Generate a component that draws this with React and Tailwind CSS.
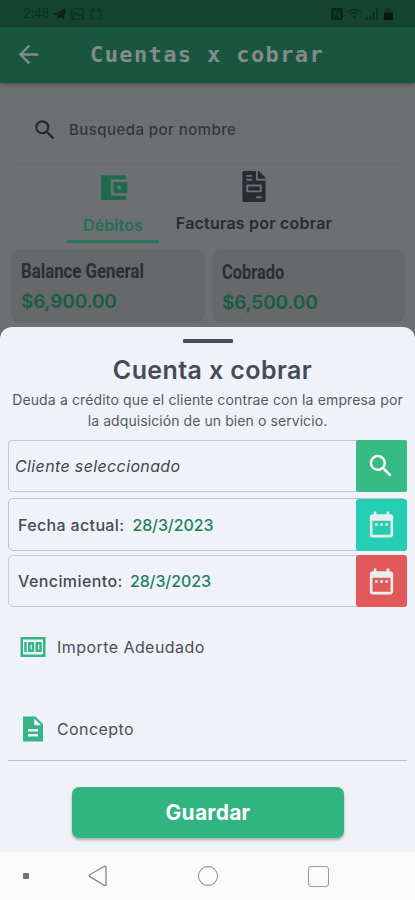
import { MdArrowBack, MdSearch, MdDateRange, MdMoney, MdWifi } from "react-icons/md";
import { FaFileInvoice } from "react-icons/fa";

const cards = [
  { label: "Balance General", amount: "$6,900.00", box: "w-[192px] pl-[9px] pt-[9px]", scale: "scale-x-[0.84]" },
  { label: "Cobrado", amount: "$6,500.00", box: "w-[191px] pl-[9px] pt-[10px]", scale: "scale-x-[0.82]" },
];

const dates = [
  { label: "Fecha actual:", value: "28/3/2023", color: "bg-[#25cdb2]", border: "border-[#bdbfd8]", height: "h-[53px] mt-[6px]", tracking: "tracking-[0.35px]", gap: "gap-[8px]" },
  { label: "Vencimiento:", value: "28/3/2023", color: "bg-[#e2595c]", border: "border-[#c6c8e2]", height: "h-[52px] mt-[4px]", tracking: "tracking-[0.42px]", gap: "gap-[7px]" },
];

function WalletIcon() {
  return (
    <svg viewBox="0 0 24 24" className="w-[33px] h-[33px]" fill="currentColor">
      <path d="M21 18v3H3V3h18v3H10v12h11zm-9-2h10V8H12v8zm4-2.5c-.83 0-1.5-.67-1.5-1.5s.67-1.5 1.5-1.5 1.5.67 1.5 1.5-.67 1.5-1.5 1.5z" />
    </svg>
  );
}

function DocumentIcon() {
  return (
    <svg viewBox="0 0 24 24" className="w-[30px] h-[30px]" fill="currentColor">
      <path d="M14 2H4v20h16V8l-6-6zm2 16H8v-2h8v2zm0-4H8v-2h8v2zm-3-5V3.5L18.5 9H13z" />
    </svg>
  );
}

function StatusBar() {
  return (
    <div className="h-[27px] bg-[#144430] text-[#0e3023] flex items-center justify-between pl-[23px] pr-[22px]">
      <div className="flex items-center">
        <span className="w-[30px] text-[13px] tracking-[-0.5px] leading-none">2:48</span>
        <svg viewBox="0 0 14 12" className="w-[13px] h-[12px] text-[#0a2319]" fill="currentColor">
          <path d="M0 6 14 0 11.500 12 7 9 5 11 4.500 7.500 10 3.500 3.500 7z" />
        </svg>
        <svg viewBox="0 0 13 12" className="w-[13px] h-[12px] ml-[5px]" fill="none" stroke="currentColor" strokeWidth="1.300">
          <rect x="1" y="1" width="11" height="10" />
          <path d="m2 9 3-4 2.500 3L9 6l3 3" />
        </svg>
        <svg viewBox="0 0 12 12" className="w-[12px] h-[12px] ml-[6px]" fill="none" stroke="currentColor" strokeWidth="1.200">
          <rect x="1" y="2" width="10" height="9" rx="1" strokeDasharray="3 1" />
          <path d="M3 0v3M9 0v3" />
        </svg>
      </div>
      <div className="flex items-center">
        <svg viewBox="0 0 12 12" className="w-[12px] h-[12px]">
          <rect width="12" height="12" rx="2" fill="#0b261b" />
          <path d="M3.500 9V3l5 6V3" fill="none" stroke="#144430" strokeWidth="1.100" />
        </svg>
        <MdWifi className="w-[15px] h-[15px] ml-[4px]" />
        <svg viewBox="0 0 12 12" className="w-[12px] h-[12px] ml-[4px]" fill="currentColor">
          <path d="M0 9h2v3H0zM3.300 7h2v5h-2zM6.600 4h2v8h-2zM10 0h2v12h-2z" />
        </svg>
        <svg viewBox="0 0 9 12" className="w-[9px] h-[12px] ml-[6px]">
          <path d="M3 0h3v1.500h3V12H0V1.500h3z" fill="currentColor" opacity=".6" />
          <path d="M0 5h9v7H0z" fill="#06170f" />
        </svg>
      </div>
    </div>
  );
}

function Page() {
  return (
    <div className="h-[327px] bg-[#6d7073] overflow-hidden">
      <StatusBar />
      <header className="h-[56px] bg-[#19563f] flex items-center pl-[14px] text-[#838c88] shadow-[0_1px_4px_rgba(0,0,0,0.35)]">
        <MdArrowBack className="w-[29px] h-[29px] mb-[2px]" />
        <h1 className="ml-[47px] font-['DejaVu_Sans_Mono',monospace] font-bold text-[22px] tracking-[1.38px] leading-none whitespace-nowrap">Cuentas x cobrar</h1>
      </header>

      <div className="ml-[18px] mr-[13px] h-[82px] border-b border-[#65696c] flex items-center pt-[13px] pl-[14px] text-[#31373c]">
        <MdSearch className="w-[26px] h-[26px] text-[#24292e]" />
        <span className="ml-[11px] text-[15px] tracking-[0.44px] font-medium whitespace-nowrap">Busqueda por nombre</span>
      </div>

      <div className="flex h-[85px] text-[16px] font-semibold">
        <div className="ml-[67px] w-[92px] h-[78px] border-b-[3px] border-[#2b7359] flex flex-col items-center text-[#1c6a4b]">
          <div className="mt-[6px] h-[33px]"><WalletIcon /></div>
          <span className="mt-[9px] leading-[24px] tracking-[0.1px] text-[#246f54]">Débitos</span>
        </div>
        <div className="ml-[14px] w-[162px] flex flex-col items-center text-[#262c31]">
          <FaFileInvoice className="mt-[6px] w-[24px] h-[31px]" />
          <span className="mt-[9px] leading-[24px] tracking-[0.22px] whitespace-nowrap">Facturas por cobrar</span>
        </div>
      </div>

      <div className="flex gap-[9px] pl-[12px]">
        {cards.map((card) => (
          <div key={card.label} className={`h-[71px] rounded-[8px] bg-[#66686b] shadow-[0_1px_2px_rgba(0,0,0,0.15)] ${card.box}`}>
            <p className={`origin-left font-[Roboto,sans-serif] font-bold text-[20px] leading-[24px] text-[#2a2e34] whitespace-nowrap ${card.scale}`}>{card.label}</p>
            <p className="mt-[7px] text-[19px] leading-[24px] tracking-[-0.15px] font-semibold text-[#175d40]">{card.amount}</p>
          </div>
        ))}
      </div>
    </div>
  );
}

function Sheet() {
  return (
    <div className="bg-[#6d7073]">
      <div className="h-[525px] bg-[#eff3f9] rounded-t-[12px] pl-[8px] pr-[8px] flex flex-col">
        <div className="mt-[12px] w-[50px] h-[4px] bg-[#435058] self-center rounded-[1px] shrink-0"></div>
        <h2 className="mt-[10px] ml-[10px] text-center text-[25px] leading-[34px] tracking-[0.4px] font-semibold text-[#434c56]">Cuenta x cobrar</h2>
        <div className="mt-[2px] text-center text-[14px] leading-[21px] text-[#535a63] whitespace-nowrap">
          <p className="tracking-[0.14px]">Deuda a crédito que el cliente contrae con la empresa por</p>
          <p className="tracking-[0.08px]">la adquisición de un bien o servicio.</p>
        </div>

        <div className="mt-[9px] h-[52px] border border-[#c2c5e0] rounded-[4px] flex items-center shrink-0">
          <span className="grow pl-[6px] text-[16px] tracking-[0.37px] italic text-[#3f454d]">Cliente seleccionado</span>
          <div className="w-[51px] h-[52px] -my-px -mr-px pr-[2px] bg-[#38ba85] rounded-[2px] flex items-center justify-center text-white">
            <MdSearch className="w-[30px] h-[30px]" />
          </div>
        </div>

        {dates.map((date) => (
          <div key={date.label} className={`border-[1.5px] rounded-[5px] flex items-center shrink-0 ${date.border} ${date.height}`}>
            <div className={`grow flex pl-[9px] text-[16px] font-medium ${date.gap}`}>
              <span className={`text-[#454b54] ${date.tracking}`}>{date.label}</span>
              <span className="tracking-[-0.1px] text-[#257f5c]">{date.value}</span>
            </div>
            <div className={`w-[51px] h-[52px] -my-px -mr-px rounded-[3px] flex items-center justify-center text-[#e9eeee] ${date.color}`}>
              <MdDateRange className="w-[31px] h-[31px]" />
            </div>
          </div>
        ))}

        <div className="mt-[25px] flex items-center h-[30px] pl-[10px] text-[16px] text-[#4a5058]">
          <MdMoney className="w-[30px] h-[30px] text-[#35b586]" />
          <span className="ml-[9px] tracking-[0.44px]">Importe Adeudado</span>
        </div>
        <div className="mt-[52px] flex h-[47px] pl-[10px] text-[16px] leading-[30px] text-[#4a5058] border-b-[1.5px] border-[#bcc2c8]">
          <div className="text-[#35b586]"><DocumentIcon /></div>
          <span className="ml-[9px] tracking-[0.4px]">Concepto</span>
        </div>

        <button className="mt-[26px] ml-[1px] self-center w-[272px] h-[51px] shrink-0 rounded-[7px] bg-[#30b481] text-white text-[21px] tracking-[0.25px] font-bold shadow-[0_2px_3px_rgba(0,0,0,0.3)]">Guardar</button>
      </div>
    </div>
  );
}

function NavBar() {
  return (
    <div className="h-[48px] bg-[#fafafa] flex items-center">
      <div className="ml-[23px] w-[6px] h-[6px] bg-[#747474] rounded-[1px]"></div>
      <svg viewBox="0 0 19 22" className="ml-[59px] w-[19px] h-[22px]" fill="none" stroke="#858585" strokeWidth="1.300" strokeLinejoin="round">
        <path d="M16.500 1.300 1.800 9.800q-1.200.9 0 1.800l14.700 8.900q1.500.5 1.500-1V2.300q0-1.500-1.500-1z" />
      </svg>
      <div className="ml-[91px] w-[20px] h-[20px] rounded-full border-[1.3px] border-[#858585]"></div>
      <div className="ml-[90px] w-[21px] h-[21px] rounded-[3px] border-[1.5px] border-[#9a9a9a]"></div>
    </div>
  );
}

export default function App() {
  return (
    <div className="w-[415px] h-[900px] overflow-hidden font-[Inter,sans-serif]">
      <Page />
      <Sheet />
      <NavBar />
    </div>
  );
}
